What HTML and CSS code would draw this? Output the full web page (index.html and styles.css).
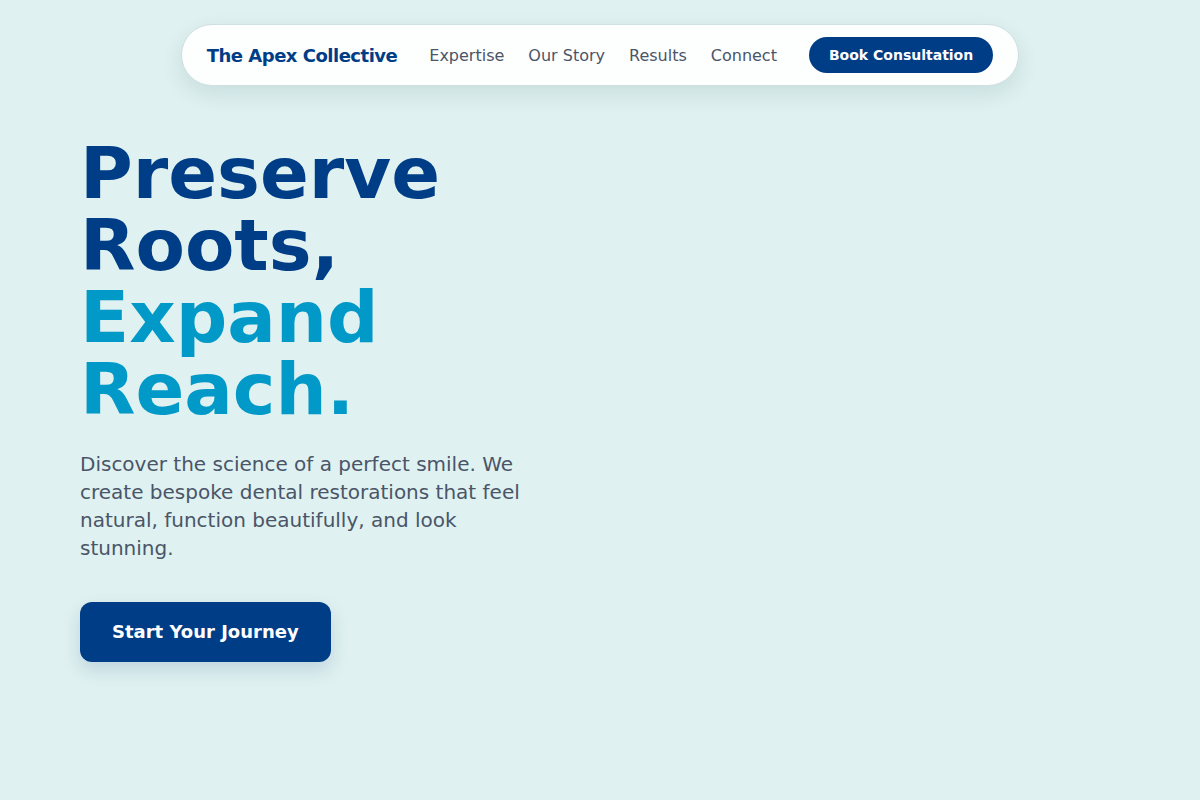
FILE: index.html
```html
<!DOCTYPE html>
<html lang="en">
<head>
    <meta charset="UTF-8">
    <meta name="viewport" content="width=device-width, initial-scale=1.0">
    <title>The Apex Collective</title>
    <link rel="stylesheet" href="styles.css">
</head>
<body>
    <header class="site-header">
        <nav class="nav-pill">
            <a class="brand" href="#">The Apex Collective</a>
            <ul class="nav-links">
                <li><a href="#expertise">Expertise</a></li>
                <li><a href="#story">Our Story</a></li>
                <li><a href="#results">Results</a></li>
                <li><a href="#connect">Connect</a></li>
            </ul>
            <a class="nav-cta" href="#book">Book Consultation</a>
        </nav>
    </header>

    <main class="hero">
        <div class="hero-copy">
            <h1 class="hero-title">
                Preserve Roots,
                <span class="accent">Expand Reach.</span>
            </h1>
            <p class="hero-text">Discover the science of a perfect smile. We create bespoke dental restorations that feel natural, function beautifully, and look stunning.</p>
            <a class="btn-primary" href="#start">Start Your Journey</a>
        </div>
        <div class="hero-visual"></div>
    </main>
</body>
</html>
```

FILE: styles.css
```css
* {
    box-sizing: border-box;
}
body {
    margin: 0;
    min-height: 100vh;
    font-family: "DejaVu Sans", Verdana, sans-serif;
    background: #dff1f0;
    color: #4a5568;
}
a {
    text-decoration: none;
}

/* top navigation */
.site-header {
    display: flex;
    justify-content: center;
    padding-top: 24px;
}
.nav-pill {
    display: flex;
    align-items: center;
    padding: 12px 25px;
    background: #fdfefe;
    border: 1px solid #cfdfe2;
    border-radius: 999px;
    box-shadow: 0 8px 20px rgba(40, 90, 100, 0.12);
}
.brand {
    font-size: 18px;
    font-weight: 700;
    letter-spacing: -0.5px;
    color: #003d87;
    margin-right: 32px;
}
.nav-links {
    display: flex;
    gap: 24px;
    list-style: none;
    margin: 0 32px 0 0;
    padding: 0;
}
.nav-links a {
    font-size: 16px;
    color: #4a5568;
}
.nav-cta {
    padding: 10px 20px;
    font-size: 14px;
    line-height: 16px;
    font-weight: 700;
    color: #fff;
    background: #003d87;
    border-radius: 999px;
}

/* hero */
.hero {
    display: grid;
    grid-template-columns: 1fr 1fr;
    gap: 64px;
    padding: 51px 80px 0;
}
.hero-title {
    margin: 0 0 25px;
    font-size: 72px;
    line-height: 1;
    font-weight: 700;
    color: #003d87;
}
.accent {
    color: #0099c8;
}
.hero-text {
    max-width: 450px;
    margin: 0 0 40px;
    font-size: 20px;
    line-height: 28px;
    color: #4a5568;
}
.btn-primary {
    display: inline-block;
    padding: 18px 32px;
    font-size: 18px;
    line-height: 24px;
    font-weight: 700;
    color: #fff;
    background: #003d87;
    border-radius: 12px;
    box-shadow: 0 8px 18px rgba(0, 61, 135, 0.15);
}
```
